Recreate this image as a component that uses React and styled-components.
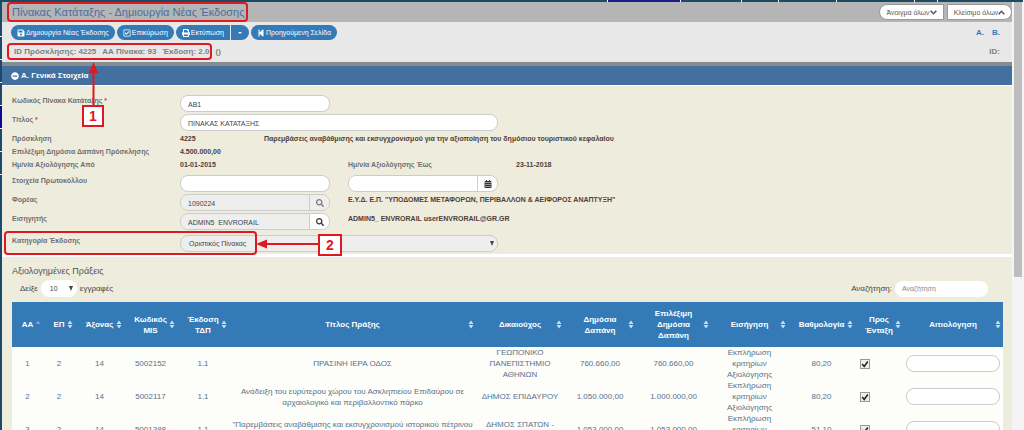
import React from 'react';
import styled, { createGlobalStyle } from 'styled-components';
import { FaSave, FaRegCheckSquare, FaPrint, FaStepBackward, FaMinusCircle, FaSearch, FaCalendarAlt, FaChevronDown, FaChevronUp } from 'react-icons/fa';

const GlobalStyle = createGlobalStyle`
  * {
    box-sizing: border-box;
  }

  body {
    margin: 0;
    overflow: hidden;
    background: #fff;
    font-family: 'Liberation Sans', Arial, sans-serif;
    font-size: 8px;
    color: #5a5a5a;
  }

  button, input, select {
    font-family: inherit;
    margin: 0;
  }
`;

const Window = styled.div`
  display: flex;
  flex-direction: column;
  height: 100vh;
  overflow: hidden;
`;

const TopStrip = styled.div`
  display: flex;
  flex: none;
  height: 2px;
  background: #1d4a63;
`;

const TopCell = styled.span`
  flex: ${({ $grow }) => $grow} 0 0;
  border-right: 1px solid #fff;
  background: ${({ $active }) => ($active ? '#1c1c8c' : '#1d4a63')};
`;

const Body = styled.div`
  position: relative;
  display: flex;
  flex: 1;
  min-height: 0;
`;

const SideStrip = styled.div`
  flex: none;
  width: 2px;
  padding-top: 12px;
  overflow: hidden;
  background: #1d4a6b;
`;

const SideCell = styled.span`
  display: block;
  height: 23px;
  border-bottom: 1px solid #fff;
  background: ${({ $active }) => ($active ? '#0a0a96' : '#1d4a6b')};
`;

const Main = styled.main`
  flex: 1;
  min-width: 0;
  overflow: hidden;
  background: #eeecdc;
`;

const ScrollTrack = styled.div`
  flex: none;
  width: 12px;
  padding: 0 2px;
  background: #f4f4f4;
`;

const ScrollThumb = styled.div`
  height: 275px;
  background: #bdbdbd;
`;

const TitleBar = styled.header`
  display: flex;
  align-items: center;
  justify-content: space-between;
  height: 20px;
  padding-left: 10px;
  background: #b5b5b5;
`;

const Title = styled.h1`
  margin: 0;
  font-size: 11px;
  font-weight: normal;
  color: #4a6f9f;
`;

const Toggles = styled.div`
  display: flex;
  gap: 3px;
`;

const ToggleButton = styled.button`
  display: flex;
  align-items: center;
  justify-content: center;
  width: 65px;
  height: 16px;
  padding: 0;
  border: 1px solid #999;
  border-radius: ${({ $side }) => ($side === 'left' ? '8px 0 0 8px' : '0 8px 8px 0')};
  background: #fff;
  font-size: 7px;
  color: #555;

  svg {
    stroke: currentColor;
    stroke-width: 40;
  }
`;

const Toolbar = styled.div`
  height: 40px;
  padding: 3px 12px 0 9px;
  background: #e8e8e8;
`;

const ToolbarRow = styled.div`
  display: flex;
  align-items: center;
  justify-content: space-between;
  height: ${({ $info }) => ($info ? '22px' : '15px')};
  font-weight: bold;
  font-size: 8px;
  color: #808080;
`;

const Buttons = styled.div`
  display: flex;
  gap: 2px;
`;

const Info = styled.div`
  display: flex;
  gap: 6px;
  padding-left: 3px;
`;

const Links = styled.nav`
  display: flex;
  gap: 8px;

  a {
    font-size: 8px;
    color: #337ab7;
    text-decoration: none;
  }
`;

const ActionButton = styled.button`
  display: flex;
  align-items: center;
  gap: 1px;
  height: 15px;
  padding: 0 6px;
  border: 0;
  border-radius: ${({ $shape }) => ({ left: '8px 0 0 8px', right: '0 8px 8px 0' })[$shape] || '8px'};
  background: #337ab7;
  font-size: 7px;
  white-space: nowrap;
  color: #fff;

  svg {
    font-size: 8px;
  }
`;

const Split = styled.div`
  display: flex;
  gap: 1px;
`;

const Caret = styled.span`
  border: 2px solid transparent;
  border-top-color: #fff;
  border-bottom: 0;
  margin: 0 1px;
`;

const SectionHeader = styled.h2`
  display: flex;
  align-items: center;
  height: 24px;
  margin: 0;
  padding-left: 9px;
  border-top: 4px solid #858b8e;
  border-bottom: 1px solid #fff;
  background: #44709f;
`;

const SectionButton = styled.button`
  display: flex;
  align-items: center;
  gap: 2px;
  padding: 0;
  border: 0;
  background: none;
  font-size: 8px;
  font-weight: bold;
  color: #fff;
`;

const Form = styled.form`
  padding: 9px 10px 0;
  border-bottom: 3px solid #fff;
`;

const Row = styled.div`
  display: grid;
  grid-template-columns: 168px 168px 168px 1fr;
  align-items: start;
  height: ${({ $text }) => ($text ? '13px' : '19px')};
  margin-top: ${({ $spaced }) => ($spaced ? '3px' : '0')};
`;

const Label = styled.label`
  font-size: 7px;
  font-weight: bold;
  line-height: 11px;
  color: #707073;
`;

const Required = styled.span`
  color: #e03c3c;
`;

const Value = styled.span`
  grid-column: span ${({ $span }) => $span || 1};
  margin-left: ${({ $near }) => ($near ? '-84px' : '0')};
  font-size: 7px;
  font-weight: bold;
  line-height: 11px;
  white-space: nowrap;
  color: #4f4038;
`;

const TextInput = styled.input`
  width: ${({ $wide }) => ($wide ? '318px' : '150px')};
  height: 17px;
  padding: 1px 7px 0;
  border: 1px solid #ccc;
  border-radius: 8px;
  background: #fff;
  font-size: 7px;
  line-height: 11px;
  color: #444;
`;

const Group = styled.div`
  display: flex;
  width: 150px;
  height: 17px;
  border: 1px solid #ccc;
  border-radius: 8px;
  overflow: hidden;

  input {
    flex: 1;
    min-width: 0;
    height: 15px;
    padding: 1px 7px 0;
    border: 0;
    background: ${({ $readonly }) => ($readonly ? '#eee' : '#fff')};
    font-size: 7px;
    line-height: 11px;
    color: #444;
  }
`;

const Addon = styled.button`
  display: flex;
  align-items: center;
  justify-content: center;
  width: 20px;
  padding: 0;
  border: 0;
  border-left: 1px solid #ccc;
  background: ${({ $muted }) => ($muted ? '#eee' : '#fff')};
  font-size: 8px;
  color: ${({ $muted }) => ($muted ? '#777' : '#333')};
`;

const SelectBox = styled.span`
  position: relative;
  display: inline-block;
  width: ${({ $wide }) => ($wide ? '318px' : '36px')};

  &::after {
    content: '';
    position: absolute;
    top: 6px;
    right: 4px;
    border: 2px solid transparent;
    border-top: 5px solid #444;
    border-bottom: 0;
  }

  select {
    appearance: none;
    width: 100%;
    height: 17px;
    padding: 0 8px;
    border: 1px solid ${({ $wide }) => ($wide ? '#ccc' : '#fff')};
    border-radius: 8px;
    background: ${({ $wide }) => ($wide ? '#eee' : '#fff')};
    font-size: 7px;
    color: #444;
  }
`;

const Results = styled.section`
  padding: 8px 9px 0 10px;
`;

const ResultsTitle = styled.h3`
  margin: 0;
  font-size: 9px;
  font-weight: normal;
  line-height: 12px;
  color: #555;
`;

const Filters = styled.div`
  display: flex;
  justify-content: space-between;
  height: 25px;
  padding: 3px 15px 0 8px;

  label {
    display: flex;
    align-items: center;
    gap: 3px;
    height: 17px;
    font-size: 8px;
    color: #444;
  }
`;

const SearchInput = styled.input`
  width: 93px;
  height: 16px;
  padding: 0 7px;
  border: 0;
  border-radius: 8px;
  font-size: 7px;

  &::placeholder {
    color: #888;
  }
`;

const Table = styled.table`
  width: 100%;
  table-layout: fixed;
  border-collapse: collapse;
  background: #fdfdfa;
`;

const Th = styled.th`
  height: 45px;
  padding: 0 2px 0 8px;
  background: #337ab7;
  font-size: 8px;
  line-height: 11px;
  color: #fff;
`;

const ThContent = styled.div`
  display: flex;
  align-items: center;
  justify-content: space-between;

  span {
    flex: 1;
    white-space: pre;
  }
`;

const Td = styled.td`
  height: 33px;
  padding: 0 3px;
  font-size: 8px;
  line-height: 11px;
  text-align: ${({ $left }) => ($left ? 'left' : 'center')};
  white-space: pre;
  color: #56728c;
`;

const Check = styled.input`
  display: block;
  appearance: none;
  width: 10px;
  height: 10px;
  margin: 0 0 0 2px;
  border: 1px solid #999;
  background: #eee;

  &:checked {
    background: #eee url("data:image/svg+xml,%3Csvg xmlns='http://www.w3.org/2000/svg' viewBox='0 0 10 10'%3E%3Cpath d='M1.5 5 4 8 8.5 1.8' fill='none' stroke='%23222' stroke-width='2'/%3E%3C/svg%3E");
  }
`;

const Reason = styled(TextInput)`
  display: block;
  width: 100%;
`;

const Highlight = styled.div`
  position: absolute;
  top: ${({ $top }) => $top}px;
  left: ${({ $left }) => $left}px;
  width: ${({ $width }) => $width}px;
  height: ${({ $height }) => $height}px;
  border: 2px solid #dd1a22;
  border-radius: 4px;
  pointer-events: none;
`;

const Marker = styled(Highlight)`
  display: flex;
  align-items: center;
  justify-content: center;
  border-radius: 0;
  background: #fff;
  font-size: 14px;
  font-weight: bold;
  color: #dd1a22;
`;

const Arrows = styled.svg`
  position: absolute;
  top: 0;
  left: 0;
  pointer-events: none;
`;

const topCells = [[612], [72, true], [61], [36], [58], [77], [22], [86]];

const columns = [
    { label: 'ΑΑ', width: 31, sorted: true },
    { label: 'ΕΠ', width: 32 },
    { label: 'Άξονας', width: 49 },
    { label: 'Κωδικός\nMIS', width: 53 },
    { label: 'Έκδοση\nΤΔΠ', width: 52 },
    { label: 'Τίτλος Πράξης', width: 247 },
    { label: 'Δικαιούχος', width: 88 },
    { label: 'Δημόσια\nΔαπάνη', width: 72 },
    { label: 'Επιλέξιμη\nΔημόσια\nΔαπάνη', width: 75 },
    { label: 'Εισήγηση', width: 77 },
    { label: 'Βαθμολογία', width: 67 },
    { label: 'Προς\nΈνταξη', width: 48 },
    { label: 'Αιτιολόγηση', width: 100 },
];

const proposal = 'Εκπλήρωση\nκριτηρίων\nΑξιολόγησης';

const rows = [
    ['1', '2', '14', '5002152', '1.1', 'ΠΡΑΣΙΝΗ ΙΕΡΑ ΟΔΟΣ', 'ΓΕΩΠΟΝΙΚΟ\nΠΑΝΕΠΙΣΤΗΜΙΟ\nΑΘΗΝΩΝ', '760.660,00', '760.660,00', proposal, '80,20'],
    ['2', '2', '14', '5002117', '1.1', 'Ανάδειξη του ευρύτερου χώρου του Ασκληπιείου Επιδαύρου σε\nαρχαιολογικό και περιβαλλοντικό πάρκο', 'ΔΗΜΟΣ ΕΠΙΔΑΥΡΟΥ', '1.050.000,00', '1.000.000,00', proposal, '80,20'],
    ['3', '2', '14', '5001388', '1.1', '"Παρεμβάσεις αναβάθμισης και εκσυγχρονισμού ιστορικού πέτρινου\nκτιρίου', 'ΔΗΜΟΣ ΣΠΑΤΩΝ -\nΑΡΤΕΜΙΔΟΣ', '1.053.000,00', '1.053.000,00', proposal, '51,10'],
];

function SortIcon({ sorted }) {
    return (
        <svg width="6" height="9" viewBox="0 0 6 9" aria-hidden="true">
            <path d="M0.5 4 3 0.5 5.5 4Z" fill={sorted ? '#7f9fe0' : '#c9dcec'} />
            {!sorted && <path d="M0.5 5 3 8.5 5.5 5Z" fill="#c9dcec" />}
        </svg>
    );
}

function GeneralForm() {
    return (
        <Form>
            <Row>
                <Label htmlFor="code">Κωδικός Πίνακα Κατάταξης <Required>*</Required></Label>
                <TextInput id="code" defaultValue="AB1" />
            </Row>
            <Row>
                <Label htmlFor="title">Τίτλος <Required>*</Required></Label>
                <TextInput id="title" $wide defaultValue="ΠΙΝΑΚΑΣ ΚΑΤΑΤΑΞΗΣ" />
            </Row>
            <Row $text>
                <Label as="span">Πρόσκληση</Label>
                <Value>4225</Value>
                <Value $near $span={2}>Παρεμβάσεις αναβάθμισης και εκσυγχρονισμού για την αξιοποίηση του δημόσιου τουριστικού κεφαλαίου</Value>
            </Row>
            <Row $text>
                <Label as="span">Επιλέξιμη Δημόσια Δαπάνη Πρόσκλησης</Label>
                <Value>4.500.000,00</Value>
            </Row>
            <Row $text>
                <Label as="span">Ημ/νία Αξιολόγησης Από</Label>
                <Value>01-01-2015</Value>
                <Label as="span">Ημ/νία Αξιολόγησης Έως</Label>
                <Value>23-11-2018</Value>
            </Row>
            <Row $spaced>
                <Label htmlFor="protocol">Στοιχεία Πρωτοκόλλου</Label>
                <TextInput id="protocol" />
                <Group>
                    <input type="text" aria-label="Ημερομηνία" />
                    <Addon type="button" aria-label="Ημερολόγιο"><FaCalendarAlt /></Addon>
                </Group>
            </Row>
            <Row>
                <Label htmlFor="agency">Φορέας</Label>
                <Group $readonly>
                    <input id="agency" readOnly value="1090224" />
                    <Addon type="button" $muted aria-label="Αναζήτηση φορέα"><FaSearch /></Addon>
                </Group>
                <Value $span={2}>Ε.Υ.Δ. Ε.Π. "ΥΠΟΔΟΜΕΣ ΜΕΤΑΦΟΡΩΝ, ΠΕΡΙΒΑΛΛΟΝ &amp; ΑΕΙΦΟΡΟΣ ΑΝΑΠΤΥΞΗ"</Value>
            </Row>
            <Row>
                <Label htmlFor="rapporteur">Εισηγητής</Label>
                <Group $readonly>
                    <input id="rapporteur" readOnly value="ADMIN5_ENVRORAIL" />
                    <Addon type="button" aria-label="Αναζήτηση εισηγητή"><FaSearch /></Addon>
                </Group>
                <Value $span={2}>ADMIN5_ ENVRORAIL userENVRORAIL@GR.GR</Value>
            </Row>
            <Row $spaced>
                <Label htmlFor="category">Κατηγορία Έκδοσης</Label>
                <SelectBox $wide>
                    <select id="category"><option>Οριστικός Πίνακας</option></select>
                </SelectBox>
            </Row>
        </Form>
    );
}

function ResultsTable() {
    return (
        <Table>
            <colgroup>
                {columns.map(({ label, width }) => <col key={label} style={{ width: `${width / 9.91}%` }} />)}
            </colgroup>
            <thead>
                <tr>
                    {columns.map(({ label, sorted }) => (
                        <Th key={label}>
                            <ThContent><span>{label}</span><SortIcon sorted={sorted} /></ThContent>
                        </Th>
                    ))}
                </tr>
            </thead>
            <tbody>
                {rows.map((row) => (
                    <tr key={row[0]}>
                        {row.map((cell, i) => <Td key={columns[i].label}>{cell}</Td>)}
                        <Td $left><Check type="checkbox" defaultChecked aria-label="Προς Ένταξη" /></Td>
                        <Td><Reason aria-label="Αιτιολόγηση" /></Td>
                    </tr>
                ))}
            </tbody>
        </Table>
    );
}

function Annotations() {
    return (
        <>
            <Highlight $top={0} $left={7} $width={241} $height={20} />
            <Highlight $top={41} $left={7} $width={205} $height={17} />
            <Highlight $top={229} $left={4} $width={253} $height={24} />
            <Arrows width="345" height="255" aria-hidden="true">
                <path d="M93.500 104V70M318 242H267" stroke="#dd1a22" strokeWidth="2" />
                <path d="M93.500 60 98 71H89ZM256 242 267 237.500V246.500Z" fill="#dd1a22" />
            </Arrows>
            <Marker $top={103} $left={82} $width={22} $height={22}>1</Marker>
            <Marker $top={232} $left={318} $width={24} $height={22}>2</Marker>
        </>
    );
}

function App() {
    return (
        <Window>
            <GlobalStyle />
            <TopStrip>
                {topCells.map(([grow, active], i) => <TopCell key={i} $grow={grow} $active={active} />)}
            </TopStrip>
            <Body>
                <SideStrip>
                    {[0, 1, 2, 3, 4, 5, 6].map((n) => <SideCell key={n} $active={n === 4} />)}
                </SideStrip>
                <Main>
                    <TitleBar>
                        <Title>Πίνακας Κατάταξης - Δημιουργία Νέας Έκδοσης</Title>
                        <Toggles>
                            <ToggleButton $side="left">Άνοιγμα όλων<FaChevronDown /></ToggleButton>
                            <ToggleButton $side="right">Κλείσιμο όλων<FaChevronUp /></ToggleButton>
                        </Toggles>
                    </TitleBar>
                    <Toolbar>
                        <ToolbarRow>
                            <Buttons>
                                <ActionButton><FaSave />Δημιουργία Νέας Έκδοσης</ActionButton>
                                <ActionButton><FaRegCheckSquare />Επικύρωση</ActionButton>
                                <Split>
                                    <ActionButton $shape="left"><FaPrint />Εκτύπωση</ActionButton>
                                    <ActionButton $shape="right" aria-label="Περισσότερα"><Caret /></ActionButton>
                                </Split>
                                <ActionButton><FaStepBackward />Προηγούμενη Σελίδα</ActionButton>
                            </Buttons>
                            <Links>
                                <a href="#a">Α.</a>
                                <a href="#b">Β.</a>
                            </Links>
                        </ToolbarRow>
                        <ToolbarRow $info>
                            <Info>
                                <span>ID Πρόσκλησης: 4225</span>
                                <span>ΑΑ Πίνακα: 93</span>
                                <span>Έκδοση: 2.0</span>
                                <span>()</span>
                            </Info>
                            <span>ID:</span>
                        </ToolbarRow>
                    </Toolbar>
                    <SectionHeader>
                        <SectionButton><FaMinusCircle />Α. Γενικά Στοιχεία</SectionButton>
                    </SectionHeader>
                    <GeneralForm />
                    <Results>
                        <ResultsTitle>Αξιολογημένες Πράξεις</ResultsTitle>
                        <Filters>
                            <label>
                                Δείξε
                                <SelectBox><select><option>10</option></select></SelectBox>
                                εγγραφές
                            </label>
                            <label>
                                Αναζήτηση:
                                <SearchInput type="search" placeholder="Αναζήτηση" />
                            </label>
                        </Filters>
                        <ResultsTable />
                    </Results>
                </Main>
                <ScrollTrack><ScrollThumb /></ScrollTrack>
                <Annotations />
            </Body>
        </Window>
    );
}

export default App;
